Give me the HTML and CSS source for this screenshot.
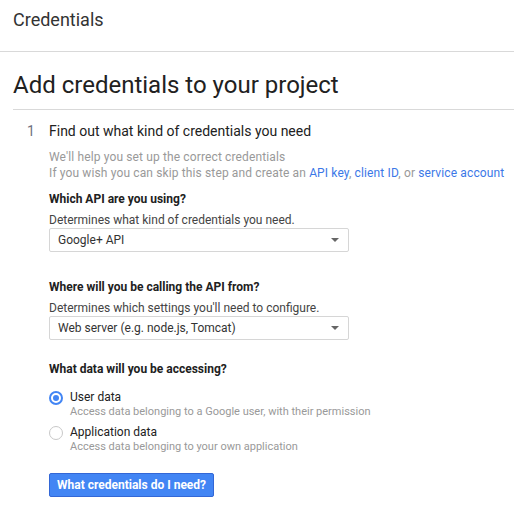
FILE: index.html
```html
<!DOCTYPE html>
<html>
<head>
<meta charset="utf-8">
<link rel="stylesheet" href="styles.css">
</head>
<body>
<header class="topbar"><h1 class="page-title">Credentials</h1></header>
<main class="content">
  <h2 class="section-title">Add credentials to your project</h2>
  <section class="step">
    <div class="step-num">1</div>
    <div class="step-body">
      <h3 class="step-title">Find out what kind of credentials you need</h3>
      <p class="hint">We'll help you set up the correct credentials<br>If you wish you can skip this step and create an <a class="link">API key</a>, <a class="link">client ID</a>, or <a class="link">service account</a></p>

      <div class="field field-api">
        <div class="label">Which API are you using?</div>
        <div class="desc">Determines what kind of credentials you need.</div>
        <div class="select"><span>Google+ API</span><span class="caret"></span></div>
      </div>

      <div class="field field-where">
        <div class="label">Where will you be calling the API from?</div>
        <div class="desc">Determines which settings you'll need to configure.</div>
        <div class="select"><span>Web server (e.g. node.js, Tomcat)</span><span class="caret"></span></div>
      </div>

      <div class="field field-data">
        <div class="label">What data will you be accessing?</div>
        <div class="radio-row">
          <span class="radio checked"></span>
          <div class="radio-text">
            <div class="radio-label">User data</div>
            <div class="radio-desc">Access data belonging to a Google user, with their permission</div>
          </div>
        </div>
        <div class="radio-row">
          <span class="radio"></span>
          <div class="radio-text">
            <div class="radio-label">Application data</div>
            <div class="radio-desc">Access data belonging to your own application</div>
          </div>
        </div>
      </div>

      <button class="btn">What credentials do I need?</button>
    </div>
  </section>
</main>
</body>
</html>
```

FILE: styles.css
```css
* { box-sizing: border-box; }
body {
  margin: 0;
  font-family: Roboto, Arial, sans-serif;
  color: #212121;
  background: #fff;
}
.topbar {
  height: 52px;
  border-bottom: 1px solid #d9d9d9;
  padding: 9px 13px 0;
}
.page-title {
  margin: 0;
  font-size: 18px;
  font-weight: 400;
  line-height: 22px;
  color: #333;
}
.content {
  padding-left: 13px;
}
.section-title {
  margin: 0;
  padding-top: 18px;
  height: 58px;
  font-size: 24px;
  font-weight: 400;
  line-height: 30px;
  color: #212121;
  border-bottom: 1px solid #d9d9d9;
}
.step {
  display: flex;
  padding-top: 12px;
}
.step-num {
  width: 36px;
  padding-left: 14px;
  font-size: 14px;
  line-height: 18px;
  color: #6f7280;
}
.step-body { flex: 1; }
.step-title {
  margin: 0;
  font-size: 14px;
  font-weight: 400;
  line-height: 18px;
  color: #212121;
}
.hint {
  margin: 9px 0 0;
  font-size: 12px;
  line-height: 16px;
  color: #999;
  letter-spacing: 0.13px;
}
.link { color: #3b78e7; text-decoration: none; }
.field-api { margin-top: 10px; }
.field-where { margin-top: 27px; }
.field-data { margin-top: 21px; }
.label {
  font-size: 12px;
  font-weight: 700;
  line-height: 16px;
  color: #212121;
}
.desc {
  margin-top: 5px;
  font-size: 12px;
  line-height: 16px;
  color: #444;
}
.select {
  width: 300px;
  height: 24px;
  border: 1px solid #d6d6d6;
  border-radius: 2px;
  display: flex;
  align-items: center;
  justify-content: space-between;
  padding: 0 9px 0 8px;
  font-size: 12px;
  color: #333;
}
.caret {
  width: 0; height: 0;
  border-left: 4px solid transparent;
  border-right: 4px solid transparent;
  border-top: 4px solid #666;
}
.radio-row {
  display: flex;
  gap: 7px;
  margin-top: 12px;
}
.radio-row + .radio-row { margin-top: 5px; }
.radio {
  width: 14px; height: 14px;
  margin-top: 2px;
  border-radius: 50%;
  border: 1px solid #c8c8c8;
  flex: none;
  position: relative;
}
.radio.checked {
  border: 2px solid #4285f4;
}
.radio.checked::after {
  content: "";
  position: absolute;
  left: 2px; top: 2px;
  width: 6px; height: 6px;
  border-radius: 50%;
  background: #4285f4;
}
.radio-label {
  font-size: 12px;
  line-height: 16px;
  color: #212121;
}
.radio-desc {
  font-size: 11px;
  line-height: 14px;
  color: #999;
}
.btn {
  margin-top: 19px;
  height: 24px;
  padding: 0 7px;
  background: #4285f4;
  border: 1px solid #3367d6;
  border-radius: 2px;
  color: #fff;
  font-family: Roboto, Arial, sans-serif;
  font-size: 12px;
  font-weight: 700;
}
```
